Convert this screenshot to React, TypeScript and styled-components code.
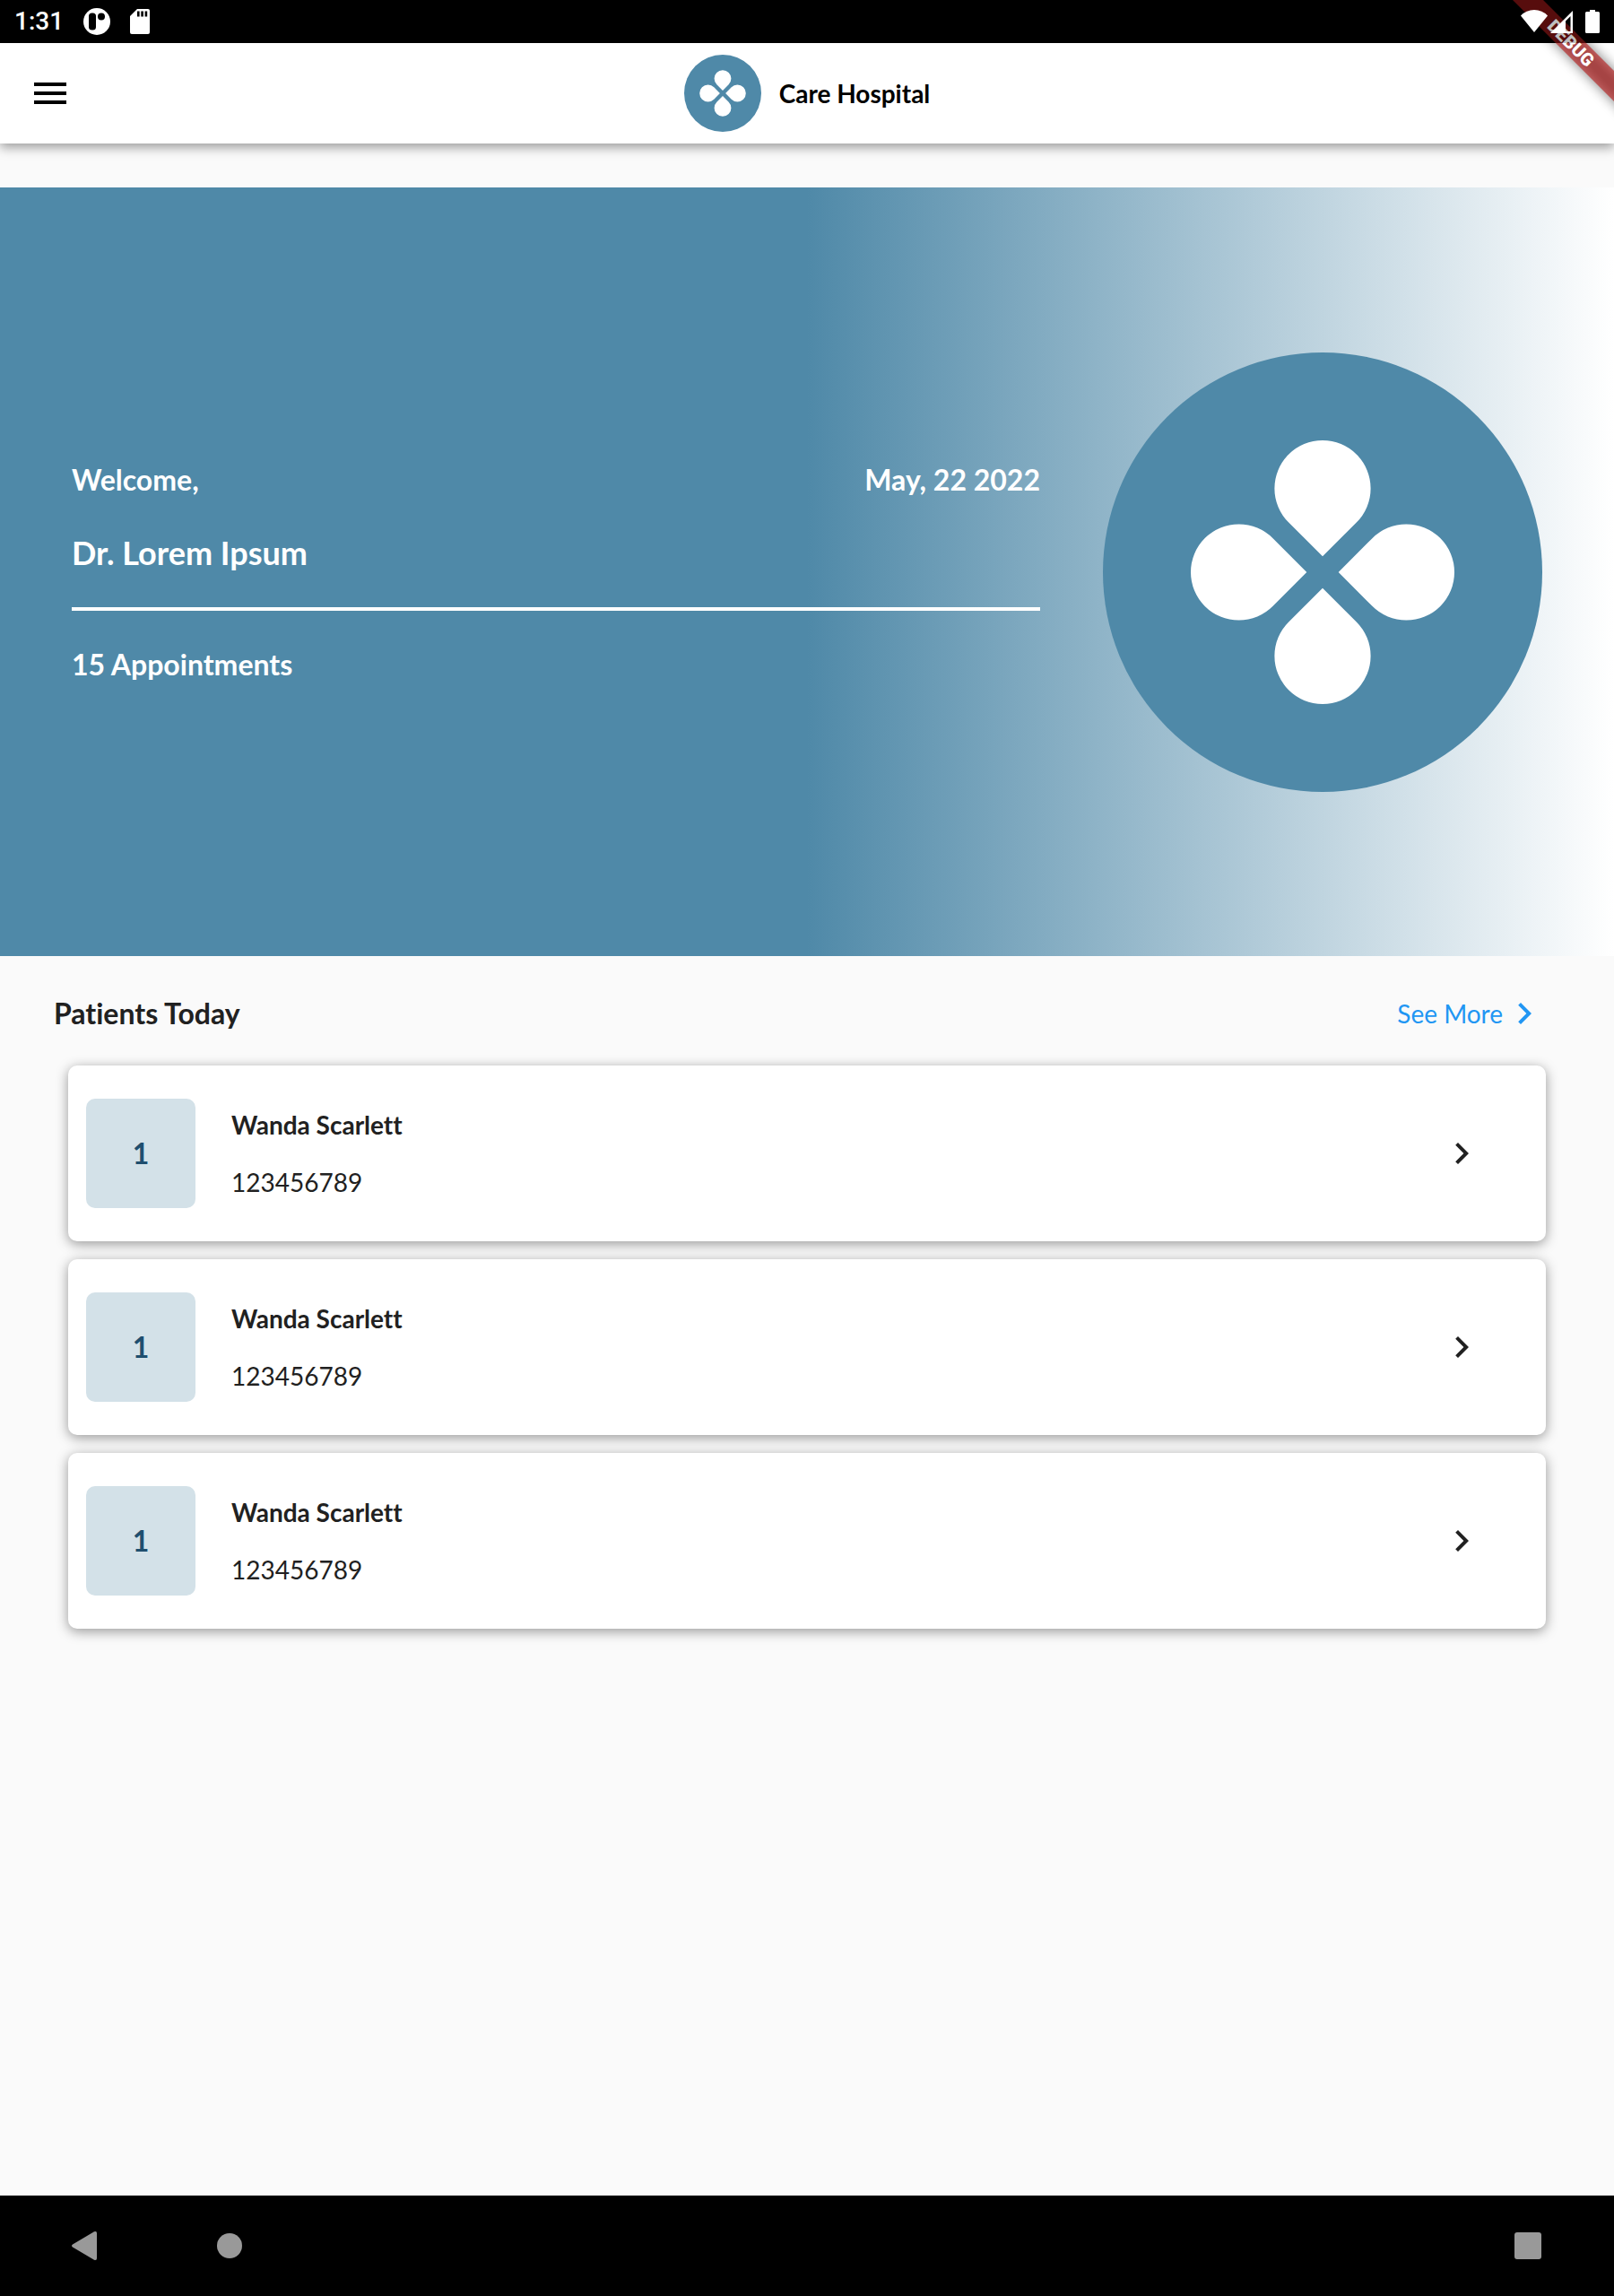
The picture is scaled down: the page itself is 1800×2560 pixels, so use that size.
import React from "react";
import styled, { createGlobalStyle } from "styled-components";

const GlobalStyle = createGlobalStyle`
  *, *::before, *::after { box-sizing: border-box; }
  body {
    margin: 0;
    background: #fafafa;
    color: #212121;
    font-family: Lato, "Noto Sans", sans-serif;
    font-variant-ligatures: none;
  }
  h1, h2, h3, p, ul { margin: 0; padding: 0; font-size: inherit; font-weight: inherit; }
  button { border: 0; padding: 0; background: none; color: inherit; font: inherit; cursor: pointer; }
  a { color: inherit; text-decoration: none; }
  svg { display: block; flex: none; }
`;

const Screen = styled.div`
  position: relative;
  display: flex;
  flex-direction: column;
  min-height: 100vh;
`;

const StatusBackdrop = styled.div`
  background: #000;
`;

const StatusBar = styled.div`
  position: relative;
  z-index: 3;
  display: flex;
  align-items: center;
  justify-content: space-between;
  height: 48px;
  padding: 0 16px;
  background: rgba(0, 0, 0, 0.25);
  color: #fff;
`;

const StatusGroup = styled.div`
  display: flex;
  align-items: center;
  gap: 22px;
`;

const Clock = styled.time`
  font: 500 28px/34px Roboto, sans-serif;
`;

const DebugCorner = styled.div`
  position: absolute;
  z-index: 2;
  top: 0;
  right: 0;
  width: 160px;
  height: 160px;
  overflow: hidden;
  pointer-events: none;
`;

const DebugRibbon = styled.div`
  position: absolute;
  top: 36px;
  left: -8px;
  width: 240px;
  height: 24px;
  transform: rotate(45deg);
  color: #fff;
  font: 900 20px/24px Roboto, sans-serif;
  text-align: center;

  &::before,
  &::after {
    content: "";
    position: absolute;
    inset: 0;
    z-index: -1;
  }
  &::before {
    background: rgba(0, 0, 0, 0.5);
    filter: blur(7px);
  }
  &::after {
    background: rgba(183, 28, 28, 0.63);
  }
`;

const AppBar = styled.header`
  position: relative;
  z-index: 1;
  display: grid;
  grid-template-columns: 1fr auto 1fr;
  align-items: center;
  height: 112px;
  padding: 0 32px;
  background: #fff;
  color: #000;
  box-shadow: 0 4px 12px rgba(0, 0, 0, 0.4);
`;

const IconButton = styled.button`
  display: grid;
  place-items: center;
  width: 48px;
  height: 48px;
`;

const Brand = styled.div`
  display: flex;
  align-items: center;
  gap: 20px;
`;

const BrandName = styled.h1`
  font-size: 28px;
  font-weight: 700;
  line-height: 36px;
`;

const Content = styled.main`
  flex: 1;
  padding: 49px 0 40px;
`;

const Hero = styled.section`
  display: flex;
  align-items: center;
  gap: 70px;
  min-height: 857px;
  padding: 40px 80px;
  background: linear-gradient(to right, #4f89a8 50%, #fff);
  color: #fff;
`;

const Summary = styled.div`
  flex: 1;
  display: flex;
  flex-direction: column;
  gap: 40px;
  font-size: 32px;
  font-weight: 700;
  line-height: 40px;
`;

const SummaryRow = styled.div`
  display: flex;
  justify-content: space-between;
`;

const DoctorName = styled.h2`
  font-size: 36px;
  font-weight: 700;
  line-height: 42px;
`;

const Divider = styled.hr`
  width: 100%;
  height: 4px;
  margin: 0;
  border: 0;
  background: #fff;
`;

const Patients = styled.section`
  display: flex;
  flex-direction: column;
  gap: 34px;
  padding: 40px 76px 0 60px;
`;

const PatientsHeader = styled.div`
  display: flex;
  align-items: center;
  justify-content: space-between;
`;

const PatientsTitle = styled.h2`
  font-size: 32px;
  font-weight: 700;
  line-height: 40px;
`;

const SeeMore = styled.a`
  display: flex;
  align-items: center;
  color: #2196f3;
  font-size: 28px;
  line-height: 36px;
`;

const PatientList = styled.ul`
  display: flex;
  flex-direction: column;
  gap: 20px;
  padding-left: 16px;
  list-style: none;
`;

const PatientCard = styled.a`
  display: flex;
  align-items: center;
  gap: 40px;
  height: 196px;
  padding: 0 70px 0 20px;
  border-radius: 10px;
  background: #fff;
  box-shadow: 0 3px 14px rgba(0, 0, 0, 0.4);
`;

const Turn = styled.span`
  display: grid;
  place-items: center;
  width: 122px;
  height: 122px;
  border-radius: 10px;
  background: #d3e1e8;
  color: #1f4e6e;
  font-size: 32px;
  font-weight: 700;
  line-height: 40px;
`;

const PatientInfo = styled.div`
  flex: 1;
  display: flex;
  flex-direction: column;
  gap: 28px;
  font-size: 28px;
  line-height: 36px;
`;

const PatientName = styled.h3`
  font-weight: 700;
`;

const NavBar = styled.nav`
  display: flex;
  align-items: center;
  justify-content: space-between;
  height: 112px;
  padding: 0 72px;
  background: #000;
  color: #999;
`;

const NavGroup = styled.div`
  display: flex;
  gap: 112px;
`;

function Logo({ size }: { size: number }) {
  return (
    <svg width={size} height={size} viewBox="0 0 490 490" aria-hidden="true">
      <circle cx="245" cy="245" r="245" fill="#4f89a8" />
      {[0, 90, 180, 270].map((angle) => (
        <path
          key={angle}
          fill="#fff"
          transform={`rotate(${angle} 245 245)`}
          d="M227.3 245L189.6 207.2A53.6 53.6 0 1 0 189.6 282.8Z"
        />
      ))}
    </svg>
  );
}

function Chevron() {
  return (
    <svg width="48" height="48" viewBox="0 0 24 24" fill="currentColor" aria-hidden="true">
      <path d="M10 6L8.59 7.41 13.17 12l-4.58 4.59L10 18l6-6z" />
    </svg>
  );
}

const patients = [
  { id: "a", turn: 1, name: "Wanda Scarlett", record: "123456789" },
  { id: "b", turn: 1, name: "Wanda Scarlett", record: "123456789" },
  { id: "c", turn: 1, name: "Wanda Scarlett", record: "123456789" },
];

export default function App() {
  return (
    <Screen>
      <GlobalStyle />
      <StatusBackdrop>
        <StatusBar>
          <StatusGroup>
            <Clock>1:31</Clock>
            <svg width="30" height="30" viewBox="0 0 30 30" aria-hidden="true">
              <circle cx="15" cy="15" r="15" fill="#fff" />
              <rect x="6" y="5.5" width="8" height="19" rx="3.5" />
              <circle cx="20" cy="9.5" r="4" />
            </svg>
            <svg width="22" height="28" viewBox="0 0 22 28" aria-hidden="true">
              <path d="M8 0H20Q22 0 22 2V26Q22 28 20 28H2Q0 28 0 26V8Z" fill="#fff" />
              <path d="M8 2.5h2.6v6H8zM12.3 2.5h2.6v6h-2.6zM16.6 2.5h2.6v6h-2.6z" />
            </svg>
          </StatusGroup>
          <svg width="88" height="26" viewBox="0 0 88 26" fill="#fff" aria-hidden="true">
            <path d="M0 6.5Q6 0 15 0T30 6.5L15 25Z" />
            <path fillRule="evenodd" d="M33 26L58 1V26ZM50 12.5V24H55.500V7Z" />
            <path d="M77 0h6v2h3.500q1.500 0 1.500 1.500v21q0 1.500-1.500 1.500h-13q-1.500 0-1.500-1.500v-21q0-1.500 1.500-1.500H77z" />
          </svg>
        </StatusBar>
      </StatusBackdrop>
      <DebugCorner>
        <DebugRibbon>DEBUG</DebugRibbon>
      </DebugCorner>

      <AppBar>
        <IconButton type="button" aria-label="Open menu">
          <svg width="48" height="48" viewBox="0 0 24 24" fill="currentColor" aria-hidden="true">
            <path d="M3 18h18v-2H3v2zm0-5h18v-2H3v2zm0-7v2h18V6H3z" />
          </svg>
        </IconButton>
        <Brand>
          <Logo size={86} />
          <BrandName>Care Hospital</BrandName>
        </Brand>
      </AppBar>

      <Content>
        <Hero>
          <Summary>
            <SummaryRow>
              <p>Welcome,</p>
              <p>May, 22 2022</p>
            </SummaryRow>
            <DoctorName>Dr. Lorem Ipsum</DoctorName>
            <Divider />
            <p>15 Appointments</p>
          </Summary>
          <Logo size={490} />
        </Hero>

        <Patients>
          <PatientsHeader>
            <PatientsTitle>Patients Today</PatientsTitle>
            <SeeMore href="#patients">
              See More
              <Chevron />
            </SeeMore>
          </PatientsHeader>
          <PatientList id="patients">
            {patients.map((patient) => (
              <li key={patient.id}>
                <PatientCard href={`#${patient.id}`}>
                  <Turn>{patient.turn}</Turn>
                  <PatientInfo>
                    <PatientName>{patient.name}</PatientName>
                    <p>{patient.record}</p>
                  </PatientInfo>
                  <Chevron />
                </PatientCard>
              </li>
            ))}
          </PatientList>
        </Patients>
      </Content>

      <NavBar aria-label="System">
        <NavGroup>
          <IconButton type="button" aria-label="Back">
            <svg width="48" height="48" viewBox="0 0 48 48" fill="currentColor" aria-hidden="true">
              <path d="M9 22.500L33 8.300Q36 7.200 36 10V38Q36 40.800 33 39.700L9 25.500Q7 24 9 22.500Z" />
            </svg>
          </IconButton>
          <IconButton type="button" aria-label="Home">
            <svg width="48" height="48" viewBox="0 0 48 48" fill="currentColor" aria-hidden="true">
              <circle cx="24" cy="24" r="14" />
            </svg>
          </IconButton>
        </NavGroup>
        <IconButton type="button" aria-label="Recent apps">
          <svg width="48" height="48" viewBox="0 0 48 48" fill="currentColor" aria-hidden="true">
            <rect x="9" y="9" width="30" height="30" rx="3" />
          </svg>
        </IconButton>
      </NavBar>
    </Screen>
  );
}
